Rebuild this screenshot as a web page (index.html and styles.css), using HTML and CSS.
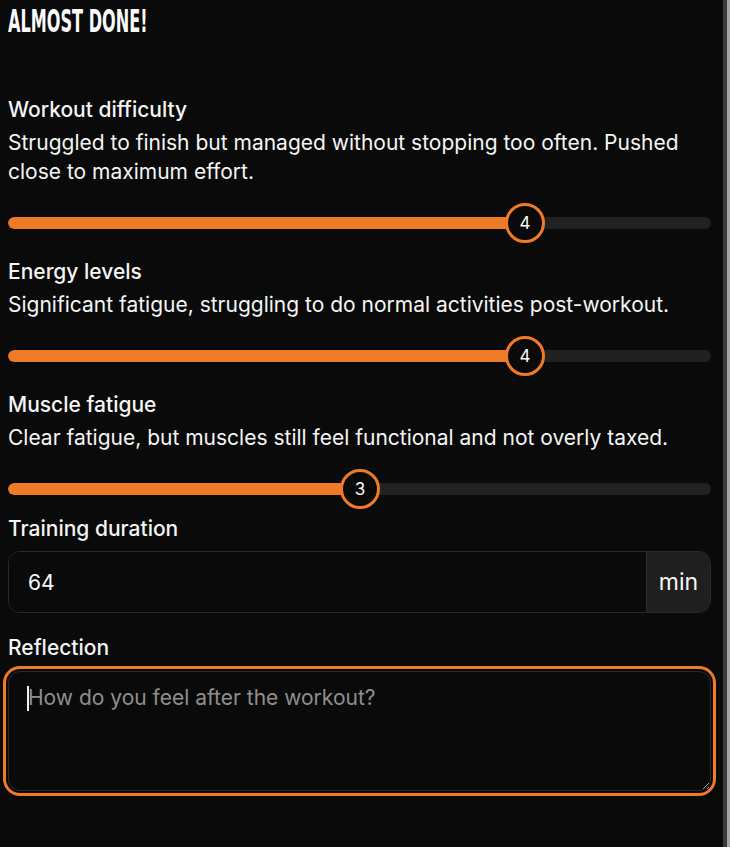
FILE: index.html
```html
<!DOCTYPE html>
<html lang="en">
<head>
<meta charset="utf-8">
<title>Almost done</title>
<link rel="stylesheet" href="styles.css">
</head>
<body>
<div class="page">
  <main class="main">
    <h1 class="title"><span class="title-text">ALMOST DONE!</span></h1>

    <section class="rating">
      <div class="label">Workout difficulty</div>
      <p class="desc">Struggled to finish but managed without stopping too often. Pushed close to maximum effort.</p>
      <div class="slider">
        <div class="track"><div class="fill" style="width: 517px"></div></div>
        <div class="thumb" style="left: 497px">4</div>
      </div>
    </section>

    <section class="rating">
      <div class="label">Energy levels</div>
      <p class="desc">Significant fatigue, struggling to do normal activities post-workout.</p>
      <div class="slider">
        <div class="track"><div class="fill" style="width: 517px"></div></div>
        <div class="thumb" style="left: 497px">4</div>
      </div>
    </section>

    <section class="rating">
      <div class="label">Muscle fatigue</div>
      <p class="desc">Clear fatigue, but muscles still feel functional and not overly taxed.</p>
      <div class="slider">
        <div class="track"><div class="fill" style="width: 352px"></div></div>
        <div class="thumb" style="left: 332px">3</div>
      </div>
    </section>

    <section class="field field-duration">
      <div class="label">Training duration</div>
      <div class="input-group">
        <input class="input" type="text" value="64">
        <span class="addon">min</span>
      </div>
    </section>

    <section class="field field-reflection">
      <div class="label">Reflection</div>
      <div class="textarea-wrap">
        <textarea class="textarea" placeholder="How do you feel after the workout?" autofocus></textarea>
        <span class="caret"></span>
      </div>
    </section>
  </main>
  <div class="scrollbar"><div class="scroll-track"></div><div class="scroll-thumb"></div></div>
</div>
</body>
</html>
```

FILE: styles.css
```css
* { box-sizing: border-box; }

html, body {
  margin: 0;
  padding: 0;
  background: #0a0a0a;
  height: 847px;
  overflow: hidden;
}

body {
  font-family: Inter, "Noto Sans", "Liberation Sans", sans-serif;
  color: #f5f5f5;
}

.page {
  display: flex;
  height: 847px;
}

.main {
  flex: 1;
  padding: 0 12px 0 8px;
}

.title {
  margin: 0;
  height: 96px;
  padding-top: 4px;
  font-family: "DejaVu Sans", sans-serif;
  font-stretch: condensed;
  font-weight: 700;
  font-size: 32px;
  line-height: 34px;
  color: #fafafa;
}

.title-text {
  display: inline-block;
  transform: scaleX(0.56);
  transform-origin: left center;
  letter-spacing: 0;
}

.label {
  font-size: 21px;
  font-weight: 500;
  line-height: 28px;
}

.desc {
  margin: 4px 0 0;
  font-size: 21px;
  line-height: 29px;
  font-weight: 400;
}

.rating {
  margin-bottom: 15px;
}

.slider {
  position: relative;
  height: 40px;
  margin-top: 17px;
  display: flex;
  align-items: center;
}

.track {
  width: 100%;
  height: 12px;
  border-radius: 6px;
  background: #212121;
  overflow: hidden;
}

.fill {
  height: 100%;
  background: #ef7a27;
  border-radius: 6px 0 0 6px;
}

.thumb {
  position: absolute;
  top: 0;
  width: 40px;
  height: 40px;
  border-radius: 50%;
  border: 3px solid #ef7a27;
  background: #0a0a0a;
  color: #fafafa;
  font-size: 17px;
  font-weight: 400;
  display: flex;
  align-items: center;
  justify-content: center;
}

.field-duration {
  margin-top: -9px;
}

.field-reflection {
  margin-top: 21px;
}

.input-group {
  margin-top: 8px;
  display: flex;
  height: 62px;
  border: 1px solid #2a2a2a;
  border-radius: 12px;
  overflow: hidden;
}

.input {
  flex: 1;
  min-width: 0;
  border: 0;
  background: #0a0a0a;
  color: #fafafa;
  font-family: inherit;
  font-size: 21px;
  padding: 0 19px;
  outline: none;
}

.addon {
  width: 64px;
  display: flex;
  align-items: center;
  justify-content: center;
  background: #1f1f1f;
  border-left: 1px solid #2a2a2a;
  font-size: 23px;
  color: #fafafa;
}

.textarea-wrap {
  position: relative;
  margin-top: 9px;
}

.textarea {
  display: block;
  width: 100%;
  height: 120px;
  border: 1px solid #2a2a2a;
  border-radius: 12px;
  background: #0a0a0a;
  color: #fafafa;
  caret-color: #fafafa;
  font-family: inherit;
  font-size: 21px;
  line-height: 28px;
  padding: 12px 19px;
  outline: none;
  box-shadow: 0 0 0 2px #0a0a0a, 0 0 0 5px #ef7a27;
}

.textarea::placeholder {
  color: #8f8f8f;
}

.caret {
  position: absolute;
  left: 19px;
  top: 15px;
  width: 2px;
  height: 25px;
  background: #f0f0f0;
}

.scrollbar {
  width: 7px;
  display: flex;
  height: 847px;
}

.scroll-track {
  width: 4px;
  background: #3b3b3b;
}

.scroll-thumb {
  width: 3px;
  background: #a3a3a3;
}
```
